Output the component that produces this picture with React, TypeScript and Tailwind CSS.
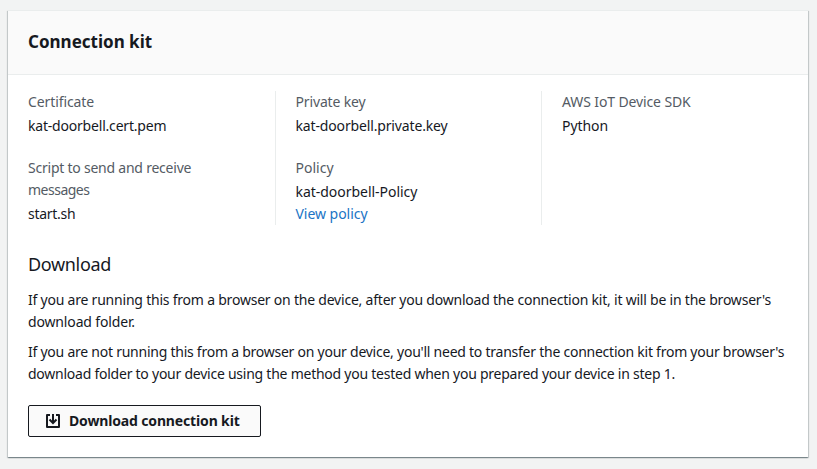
import React from "react";

type FieldProps = { label: React.ReactNode; children: React.ReactNode };

function Field({ label, children }: FieldProps) {
  return (
    <div className="flex flex-col gap-0.5">
      <div className="text-[#545b64]">{label}</div>
      <div>{children}</div>
    </div>
  );
}

function DownloadIcon() {
  return (
    <svg width="16" height="16" viewBox="0 0 16 16" fill="none" stroke="currentColor" strokeWidth="2" aria-hidden="true">
      <path d="M5 2H2v12h12V2h-3" strokeLinejoin="round" />
      <path d="M8 1v9M4.5 6.5 8 10l3.5-3.5" />
    </svg>
  );
}

export default function App() {
  return (
    <div className="h-[469px] w-[817px] bg-[#f2f3f3] pt-[10px] pr-[9px] pl-2 font-['Noto_Sans','Open_Sans',sans-serif] text-sm leading-[22px] whitespace-nowrap text-[#16191f]">
      <section className="h-[447px] border-t border-[#eaeded] bg-white shadow-[0_1px_1px_0_rgba(0,28,36,0.3),1px_1px_1px_0_rgba(0,28,36,0.15),-1px_1px_1px_0_rgba(0,28,36,0.15)]">
        <header className="flex h-16 items-center border-b border-[#eaeded] bg-[#fafafa] px-5 pb-0.5">
          <h2 className="text-[17px] leading-[22px] font-bold">Connection kit</h2>
        </header>

        <div className="px-5 pt-4">
          <div className="grid h-[134px] grid-cols-[248px_266px_1fr]">
            <div className="flex flex-col gap-5 border-r border-[#eaeded]">
              <Field label={<span className="tracking-[-0.1px]">Certificate</span>}>
                <span className="tracking-[-0.2px]">kat-doorbell.cert.pem</span>
              </Field>
              <Field
                label={
                  <>
                    <span className="block tracking-[-0.23px]">Script to send and receive</span>
                    <span className="block tracking-[-0.5px]">messages</span>
                  </>
                }
              >
                <span className="tracking-[-0.28px]">start.sh</span>
              </Field>
            </div>
            <div className="flex flex-col gap-5 border-r border-[#eaeded] pl-[19.5px]">
              <Field label={<span className="tracking-[-0.15px]">Private key</span>}>
                <span className="tracking-[-0.15px]">kat-doorbell.private.key</span>
              </Field>
              <Field label="Policy">
                <div className="tracking-[-0.03px]">kat-doorbell-Policy</div>
                <a className="block tracking-[-0.04px] text-[#2074c5]">View policy</a>
              </Field>
            </div>
            <div className="pl-5">
              <Field label={<span className="tracking-[-0.12px]">AWS IoT Device SDK</span>}>
                <span className="tracking-[-0.07px]">Python</span>
              </Field>
            </div>
          </div>

          <h3 className="mt-[27px] text-lg leading-[24px] tracking-[-0.33px]">Download</h3>

          <p className="mt-[13px]">
            <span className="block tracking-[-0.216px]">
              If you are running this from a browser on the device, after you download the connection kit, it will be in the browser's
            </span>
            <span className="block tracking-[-0.15px]">download folder.</span>
          </p>
          <p className="mt-2">
            <span className="block tracking-[-0.245px]">
              If you are not running this from a browser on your device, you'll need to transfer the connection kit from your browser's
            </span>
            <span className="block tracking-[-0.244px]">
              download folder to your device using the method you tested when you prepared your device in step 1.
            </span>
          </p>

          <button className="mt-5 flex h-8 w-[233px] items-center gap-2 rounded-[2px] border border-[#16191f] bg-[#fafafa] pl-4 font-bold tracking-[-0.15px]">
            <DownloadIcon />
            <span>Download connection kit</span>
          </button>
        </div>
      </section>
    </div>
  );
}
